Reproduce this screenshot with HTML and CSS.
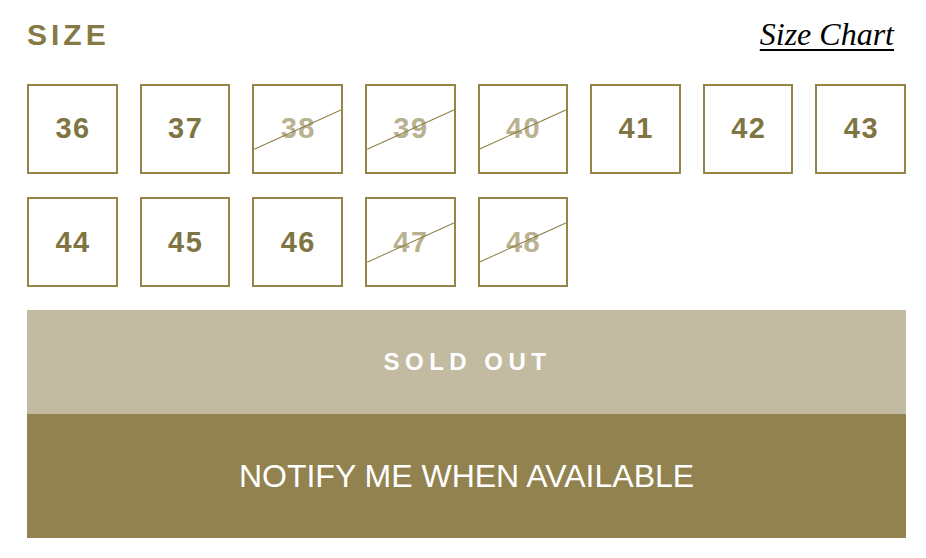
FILE: index.html
```html
<!DOCTYPE html>
<html lang="en">
<head>
    <meta charset="UTF-8">
    <meta name="viewport" content="width=device-width, initial-scale=1.0">
    <title>Select Size</title>
    <link rel="stylesheet" href="styles.css">
</head>
<body>
    <div class="size-picker">
        <div class="size-header">
            <h2>SIZE</h2>
            <a href="#" class="size-chart">Size Chart</a>
        </div>

        <div class="size-grid">
            <button class="size">36</button>
            <button class="size">37</button>
            <button class="size unavailable">38</button>
            <button class="size unavailable">39</button>
            <button class="size unavailable">40</button>
            <button class="size">41</button>
            <button class="size">42</button>
            <button class="size">43</button>
            <button class="size">44</button>
            <button class="size">45</button>
            <button class="size">46</button>
            <button class="size unavailable">47</button>
            <button class="size unavailable">48</button>
        </div>

        <div class="sold-out">SOLD OUT</div>
        <button class="notify">NOTIFY ME WHEN AVAILABLE</button>
    </div>
</body>
</html>
```

FILE: styles.css
```css
:root {
    --gold: #958647;
    --gold-text: #7f7542;
    --gold-faded: #b8b192;
    --sold-out: #c2bba1;
    --notify: #91824f;
}

* {
    margin: 0;
    padding: 0;
    box-sizing: border-box;
}

body {
    background: #ffffff;
    font-family: 'Liberation Sans', Arial, sans-serif;
}

.size-picker {
    padding: 16px 20px 20px 27px;
}

.size-header {
    display: flex;
    justify-content: space-between;
    align-items: baseline;
    line-height: 36px;
    margin-bottom: 30.5px;
}

.size-header h2 {
    font-size: 30px;
    font-weight: 700;
    letter-spacing: 4px;
    color: #857a45;
}

.size-chart {
    font-family: 'Liberation Serif', 'Times New Roman', serif;
    font-style: italic;
    font-size: 32px;
    color: #000000;
    margin-right: 12px;
    text-decoration: underline;
    text-decoration-thickness: 2px;
    text-underline-offset: 4px;
}

.size-grid {
    display: grid;
    grid-template-columns: repeat(8, 1fr);
    column-gap: 22px;
    row-gap: 22.6px;
}

.size {
    position: relative;
    aspect-ratio: 1;
    background: #ffffff;
    border: 2px solid var(--gold);
    font-family: inherit;
    font-size: 29px;
    font-weight: 700;
    letter-spacing: 1.5px;
    padding-left: 1.5px;
    color: var(--gold-text);
    cursor: pointer;
    overflow: hidden;
}

.size.unavailable {
    color: var(--gold-faded);
    cursor: default;
}

/* diagonal strike through sizes that are out of stock */
.size.unavailable::after {
    content: '';
    position: absolute;
    top: 50%;
    left: -5%;
    width: 110%;
    height: 1px;
    background: #8d7f46;
    transform: rotate(-24.4deg);
}

.sold-out {
    margin-top: 22.8px;
    height: 104px;
    display: flex;
    align-items: center;
    justify-content: center;
    background: var(--sold-out);
    color: #ffffff;
    font-size: 24px;
    font-weight: 700;
    letter-spacing: 5.5px;
    padding-left: 2px;
}

.notify {
    display: block;
    width: 100%;
    height: 124px;
    border: none;
    background: var(--notify);
    color: #ffffff;
    font-family: inherit;
    font-size: 32px;
    cursor: pointer;
}
```
